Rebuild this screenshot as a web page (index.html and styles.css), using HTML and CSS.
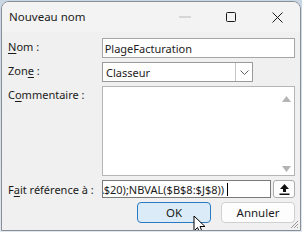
FILE: index.html
```html
<!DOCTYPE html>
<html lang="fr">
<head>
  <meta charset="UTF-8">
  <title>Nouveau nom</title>
  <link rel="stylesheet" href="styles.css">
</head>
<body>
<div class="dialog">
  <div class="titlebar">
    <span class="title">Nouveau nom</span>
    <div class="caption">
      <span class="cap-btn">
        <svg width="12" height="2" viewBox="0 0 12 2"><rect x="0" y="0.5" width="12" height="1" fill="#b9b9b9"/></svg>
      </span>
      <span class="cap-btn">
        <svg width="10" height="10" viewBox="0 0 10 10"><rect x="0.5" y="0.5" width="9" height="9" rx="1" fill="none" stroke="#1a1a1a"/></svg>
      </span>
      <span class="cap-btn">
        <svg width="11" height="11" viewBox="0 0 11 11"><path d="M0.5 0.5 L10.5 10.5 M10.5 0.5 L0.5 10.5" stroke="#1a1a1a" stroke-width="1"/></svg>
      </span>
    </div>
  </div>

  <div class="content">
    <div class="row">
      <label class="lbl"><u>N</u>om :</label>
      <div class="field text-field">PlageFacturation</div>
    </div>

    <div class="row">
      <label class="lbl">Zon<u>e</u> :</label>
      <div class="field combo">
        <span class="combo-value">Classeur</span>
        <span class="combo-btn">
          <svg width="9" height="5" viewBox="0 0 9 5"><path d="M0.5 0.5 L4.5 4.5 L8.5 0.5" fill="none" stroke="#606060"/></svg>
        </span>
      </div>
    </div>

    <div class="row">
      <label class="lbl">C<u>o</u>mmentaire :</label>
      <div class="field memo">
        <div class="scroll">
          <svg width="9" height="6" viewBox="0 0 9 6"><path d="M0 6 L4.5 0 L9 6 Z" fill="#b4b4b4"/></svg>
          <svg width="9" height="6" viewBox="0 0 9 6"><path d="M0 0 L4.5 6 L9 0 Z" fill="#b4b4b4"/></svg>
        </div>
      </div>
    </div>

    <div class="row ref-row">
      <label class="lbl">F<u>a</u>it référence à :</label>
      <div class="field ref-field">
        <span class="ref-text">=SOMME($A$1:$A$20);NBVAL($B$8:$J$8))</span>
        <span class="caret"></span>
      </div>
      <span class="collapse-btn">
        <svg width="11" height="12" viewBox="0 0 11 12"><path d="M5.5 1 L1 6 L4 6 L4 9 L7 9 L7 6 L10 6 Z" fill="#111"/><rect x="0.5" y="10.5" width="10" height="1.5" fill="#111"/></svg>
      </span>
    </div>

    <div class="buttons">
      <button class="btn btn-ok">OK</button>
      <button class="btn">Annuler</button>
    </div>
  </div>

  <svg class="grip" width="10" height="10" viewBox="0 0 10 10"><path d="M9 2 L2 9 M9 5 L5 9 M9 8 L8 9" stroke="#9a9a9a" stroke-width="1"/></svg>
  <svg class="pointer" width="14" height="20" viewBox="0 0 14 20"><path d="M1 1 L1 16 L4.5 12.5 L7 18.5 L9.5 17.5 L7 11.5 L12 11.5 Z" fill="#fff" stroke="#000" stroke-width="1" stroke-linejoin="round"/></svg>
</div>
</body>
</html>
```

FILE: styles.css
```css
html, body {
  margin: 0;
  padding: 0;
}

body {
  width: 302px;
  height: 232px;
  overflow: hidden;
  background: linear-gradient(180deg, #c9d6e3 0%, #dfe6ee 100%);
  font-family: "Noto Sans", "Open Sans", sans-serif;
  font-size: 11px;
  color: #1b1b1b;
}

.dialog {
  position: relative;
  box-sizing: border-box;
  width: 300px;
  height: 230px;
  margin: 1px 0 0 1px;
  background: #f0f0f0;
  border: 1px solid #8a8f96;
  border-radius: 8px 8px 0 0;
  overflow: hidden;
}

.titlebar {
  display: flex;
  align-items: center;
  justify-content: space-between;
  height: 30px;
  background: #f3f3f3;
}

.title {
  padding-left: 7px;
  padding-bottom: 1px;
  font-size: 11.5px;
}

.caption {
  display: flex;
  height: 100%;
}

.cap-btn {
  display: flex;
  align-items: center;
  justify-content: center;
  width: 46px;
  height: 100%;
}

.content {
  padding: 6px 5px 0 6px;
}

.row {
  display: flex;
  align-items: flex-start;
  margin-bottom: 4px;
}

.lbl {
  width: 94px;
  padding-top: 1px;
  line-height: 16px;
  white-space: nowrap;
}

.lbl u {
  text-decoration-thickness: 1px;
  text-underline-offset: 2px;
}

.field {
  box-sizing: border-box;
  background: #fff;
  border: 1px solid #a5a5a5;
}

.text-field {
  width: 194px;
  height: 20px;
  line-height: 19px;
  padding-left: 2px;
}

.combo {
  display: flex;
  width: 151px;
  height: 20px;
  border-color: #9a9a9a;
}

.combo-value {
  flex: 1;
  line-height: 19px;
  padding-left: 3px;
}

.combo-btn {
  display: flex;
  align-items: center;
  justify-content: center;
  width: 16px;
  border-left: 1px solid #c8c8c8;
}

.memo {
  display: flex;
  justify-content: flex-end;
  width: 194px;
  height: 90px;
  border-color: #b5b5b5;
}

.scroll {
  display: flex;
  flex-direction: column;
  justify-content: space-between;
  align-items: center;
  width: 16px;
  padding: 9px 0 3px;
}

.ref-row {
  align-items: center;
}

.ref-field {
  display: flex;
  justify-content: flex-end;
  align-items: center;
  width: 170px;
  height: 18px;
  overflow: hidden;
  white-space: nowrap;
  padding-right: 42px;
  border-color: #7a7a7a;
}

.caret {
  flex: none;
  width: 1px;
  height: 13px;
  margin-left: 3px;
  background: #000;
}

.collapse-btn {
  display: flex;
  align-items: center;
  justify-content: center;
  box-sizing: border-box;
  width: 22px;
  height: 18px;
  margin-left: 2px;
  background: #fdfdfd;
  border: 1px solid #adadad;
  border-radius: 3px;
}

.buttons {
  display: flex;
  justify-content: flex-end;
  gap: 10px;
}

.btn {
  box-sizing: border-box;
  width: 74px;
  height: 21px;
  padding: 0;
  font-family: inherit;
  font-size: 11.5px;
  color: #1b1b1b;
  background: #fdfdfd;
  border: 1px solid #d0d0d0;
  border-radius: 4px;
}

.btn-ok {
  background: #dcebf8;
  border-color: #2b79c2;
}

.grip {
  position: absolute;
  right: 1px;
  bottom: 1px;
}

.pointer {
  position: absolute;
  left: 191px;
  top: 213px;
}
```
